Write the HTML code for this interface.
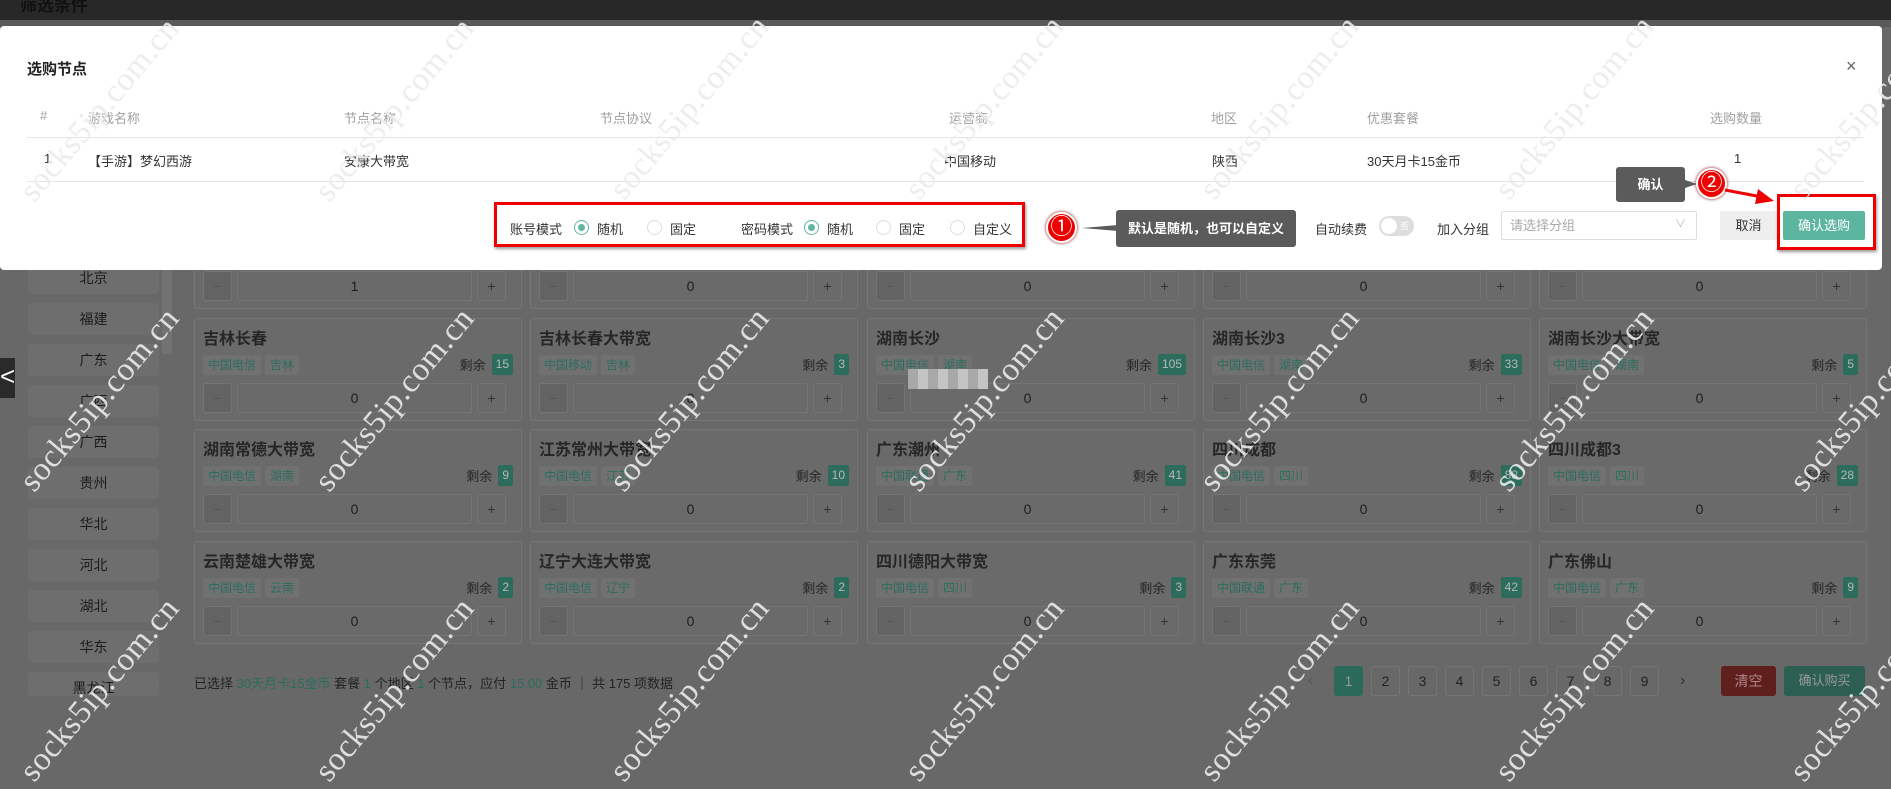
<!DOCTYPE html>
<html><head><meta charset="utf-8"><style>
*{margin:0;padding:0;box-sizing:border-box}
body{width:1891px;height:724px;overflow:hidden;background:#686868;font-family:"Liberation Sans","Noto Sans CJK SC",sans-serif;position:relative;font-size:13px;color:#222}
.a{position:absolute}
.sb{position:absolute;left:28px;width:131px;height:32px;background:#6e6e6e;border-radius:4px;text-align:center;line-height:32px;font-size:14px;color:#1c1c1c}
.card{position:absolute;width:328px;height:103px;border:1px solid #767676;border-radius:3px;background:#6a6a6a}
.card .t{position:absolute;left:8px;top:6px;font-size:16px;font-weight:bold;color:#262626}
.card .tags{position:absolute;left:8px;top:36px;display:flex;gap:4px}
.tag{background:#717171;color:#2c6e5d;font-size:12px;height:20px;line-height:20px;padding:0 5px;border-radius:2px}
.rem{position:absolute;right:8px;top:35px;font-size:13px;color:#262626;display:flex;align-items:center;gap:6px}
.rem b{display:inline-block;background:#2c6c5c;color:#b8b8b8;font-weight:normal;height:21px;line-height:21px;padding:0 4px;border-radius:2px;font-size:12px}
.mn,.in,.pl{position:absolute;top:64px;height:30px;border:1px solid #757575;border-radius:3px;text-align:center;line-height:28px;font-size:14px;color:#1e1e1e}
.mn{left:8px;width:29px;background:#636363;color:#555}
.in{left:42px;width:235px;background:#6a6a6a}
.pl{left:282px;width:29px;background:#6a6a6a;color:#333}
.pg{position:absolute;top:666px;width:29px;height:30px;border:1px solid #757575;border-radius:3px;text-align:center;line-height:28px;font-size:14px;color:#222}
.wm{position:absolute;font-family:"Liberation Serif",serif;font-size:33px;color:rgba(235,235,235,0.9);transform:translate(-50%,-50%) rotate(-50deg);white-space:nowrap;letter-spacing:0.5px}
.hd{position:absolute;top:108px;color:#a0a0a0;font-size:13px}
.rw{position:absolute;top:151px;color:#333;font-size:13px}
.rd{position:absolute;top:220px;width:15px;height:15px;border:1px solid #ddd;border-radius:50%;background:#fff}
.rd.on{border-color:#5fb7a0}
.rd.on:after{content:"";position:absolute;left:3px;top:3px;width:7px;height:7px;border-radius:50%;background:#5fb7a0}
.lb{position:absolute;top:219px;font-size:13px;color:#333}
.num{position:absolute;width:31px;height:31px;border-radius:50%;background:#e00;border:2px solid #fff;box-shadow:0 0 3px #800;color:#fff;text-align:center;line-height:26px;font-size:22px}
</style></head><body>
<div class="a" style="left:0;top:0;width:1891px;height:20px;background:#282828"></div>
<div class="a" style="left:20px;top:-9px;font-size:17px;font-weight:bold;color:#111">筛选条件</div>
<div class="a" style="left:0;top:20px;width:1891px;height:7px;background:#5a5a5a"></div>

<div class="sb" style="top:262px">北京</div>
<div class="sb" style="top:303px">福建</div>
<div class="sb" style="top:344px">广东</div>
<div class="sb" style="top:385px">广西</div>
<div class="sb" style="top:426px">广西</div>
<div class="sb" style="top:467px">贵州</div>
<div class="sb" style="top:508px">华北</div>
<div class="sb" style="top:549px">河北</div>
<div class="sb" style="top:590px">湖北</div>
<div class="sb" style="top:631px">华东</div>
<div class="sb" style="top:672px;height:24px">黑龙江</div>
<div class="a" style="left:162px;top:262px;width:10px;height:92px;background:#727272"></div>
<div class="a" style="left:0;top:358px;width:15px;height:40px;background:#2a2a2a;color:#fff;font-size:26px;line-height:36px">&lt;</div>

<div class="card" style="left:194px;top:206px"><div class="mn">−</div><div class="in">1</div><div class="pl">+</div></div>
<div class="card" style="left:530px;top:206px"><div class="mn">−</div><div class="in">0</div><div class="pl">+</div></div>
<div class="card" style="left:867px;top:206px"><div class="mn">−</div><div class="in">0</div><div class="pl">+</div></div>
<div class="card" style="left:1203px;top:206px"><div class="mn">−</div><div class="in">0</div><div class="pl">+</div></div>
<div class="card" style="left:1539px;top:206px"><div class="mn">−</div><div class="in">0</div><div class="pl">+</div></div>

<div class="card" style="left:194px;top:318px"><div class="t">吉林长春</div><div class="tags"><span class="tag">中国电信</span><span class="tag">吉林</span></div><div class="rem">剩余<b>15</b></div><div class="mn">−</div><div class="in">0</div><div class="pl">+</div></div>
<div class="card" style="left:530px;top:318px"><div class="t">吉林长春大带宽</div><div class="tags"><span class="tag">中国移动</span><span class="tag">吉林</span></div><div class="rem">剩余<b>3</b></div><div class="mn">−</div><div class="in">0</div><div class="pl">+</div></div>
<div class="card" style="left:867px;top:318px"><div class="t">湖南长沙</div><div class="tags"><span class="tag">中国电信</span><span class="tag">湖南</span></div><div class="rem">剩余<b>105</b></div><div class="mn">−</div><div class="in">0</div><div class="pl">+</div></div>
<div class="card" style="left:1203px;top:318px"><div class="t">湖南长沙3</div><div class="tags"><span class="tag">中国电信</span><span class="tag">湖南</span></div><div class="rem">剩余<b>33</b></div><div class="mn">−</div><div class="in">0</div><div class="pl">+</div></div>
<div class="card" style="left:1539px;top:318px"><div class="t">湖南长沙大带宽</div><div class="tags"><span class="tag">中国电信</span><span class="tag">湖南</span></div><div class="rem">剩余<b>5</b></div><div class="mn">−</div><div class="in">0</div><div class="pl">+</div></div>

<div class="card" style="left:194px;top:429px"><div class="t">湖南常德大带宽</div><div class="tags"><span class="tag">中国电信</span><span class="tag">湖南</span></div><div class="rem">剩余<b>9</b></div><div class="mn">−</div><div class="in">0</div><div class="pl">+</div></div>
<div class="card" style="left:530px;top:429px"><div class="t">江苏常州大带宽</div><div class="tags"><span class="tag">中国电信</span><span class="tag">江苏</span></div><div class="rem">剩余<b>10</b></div><div class="mn">−</div><div class="in">0</div><div class="pl">+</div></div>
<div class="card" style="left:867px;top:429px"><div class="t">广东潮州</div><div class="tags"><span class="tag">中国联通</span><span class="tag">广东</span></div><div class="rem">剩余<b>41</b></div><div class="mn">−</div><div class="in">0</div><div class="pl">+</div></div>
<div class="card" style="left:1203px;top:429px"><div class="t">四川成都</div><div class="tags"><span class="tag">中国电信</span><span class="tag">四川</span></div><div class="rem">剩余<b>88</b></div><div class="mn">−</div><div class="in">0</div><div class="pl">+</div></div>
<div class="card" style="left:1539px;top:429px"><div class="t">四川成都3</div><div class="tags"><span class="tag">中国电信</span><span class="tag">四川</span></div><div class="rem">剩余<b>28</b></div><div class="mn">−</div><div class="in">0</div><div class="pl">+</div></div>

<div class="card" style="left:194px;top:541px"><div class="t">云南楚雄大带宽</div><div class="tags"><span class="tag">中国电信</span><span class="tag">云南</span></div><div class="rem">剩余<b>2</b></div><div class="mn">−</div><div class="in">0</div><div class="pl">+</div></div>
<div class="card" style="left:530px;top:541px"><div class="t">辽宁大连大带宽</div><div class="tags"><span class="tag">中国电信</span><span class="tag">辽宁</span></div><div class="rem">剩余<b>2</b></div><div class="mn">−</div><div class="in">0</div><div class="pl">+</div></div>
<div class="card" style="left:867px;top:541px"><div class="t">四川德阳大带宽</div><div class="tags"><span class="tag">中国电信</span><span class="tag">四川</span></div><div class="rem">剩余<b>3</b></div><div class="mn">−</div><div class="in">0</div><div class="pl">+</div></div>
<div class="card" style="left:1203px;top:541px"><div class="t">广东东莞</div><div class="tags"><span class="tag">中国联通</span><span class="tag">广东</span></div><div class="rem">剩余<b>42</b></div><div class="mn">−</div><div class="in">0</div><div class="pl">+</div></div>
<div class="card" style="left:1539px;top:541px"><div class="t">广东佛山</div><div class="tags"><span class="tag">中国电信</span><span class="tag">广东</span></div><div class="rem">剩余<b>9</b></div><div class="mn">−</div><div class="in">0</div><div class="pl">+</div></div>

<div class="a" style="left:908px;top:369px;width:80px;height:20px;background:repeating-linear-gradient(90deg,#a8a8a8 0 10px,#c4c4c4 10px 20px)"></div>

<div class="a" style="left:194px;top:673px;font-size:13px;color:#222">已选择 <span style="color:#2c6e5d">30天月卡15金币</span> 套餐 <span style="color:#2c6e5d">1</span> 个地区 <span style="color:#2c6e5d">1</span> 个节点，应付 <span style="color:#2c6e5d">15.00</span> 金币 ｜ 共 175 项数据</div>
<div class="a" style="left:1308px;top:672px;color:#555;font-size:16px">‹</div>
<div class="pg" style="left:1334px;background:#2b6a5a;border-color:#2b6a5a;color:#999">1</div>
<div class="pg" style="left:1371px">2</div>
<div class="pg" style="left:1408px">3</div>
<div class="pg" style="left:1445px">4</div>
<div class="pg" style="left:1482px">5</div>
<div class="pg" style="left:1519px">6</div>
<div class="pg" style="left:1556px">7</div>
<div class="pg" style="left:1593px">8</div>
<div class="pg" style="left:1630px">9</div>
<div class="a" style="left:1680px;top:672px;color:#333;font-size:16px">›</div>
<div class="a" style="left:1721px;top:666px;width:55px;height:30px;background:#5f1f1c;border-radius:3px;color:#a88;text-align:center;line-height:30px;font-size:14px">清空</div>
<div class="a" style="left:1784px;top:666px;width:81px;height:30px;background:#2c5e52;border-radius:3px;color:#999;text-align:center;line-height:30px;font-size:13px">确认购买</div>

<div class="a" style="left:0;top:26px;width:1882px;height:244px;background:#fff;border-radius:4px"></div>
<div class="a" style="left:27px;top:58px;font-size:15px;font-weight:bold;color:#222">选购节点</div>
<div class="a" style="left:1846px;top:56px;font-size:18px;color:#666">×</div>
<div class="hd" style="left:40px">#</div>
<div class="hd" style="left:88px">游戏名称</div>
<div class="hd" style="left:344px">节点名称</div>
<div class="hd" style="left:600px">节点协议</div>
<div class="hd" style="left:949px">运营商</div>
<div class="hd" style="left:1211px">地区</div>
<div class="hd" style="left:1367px">优惠套餐</div>
<div class="hd" style="left:1710px">选购数量</div>
<div class="a" style="left:27px;top:137px;width:1837px;height:1px;background:#e4e4e4"></div>
<div class="rw" style="left:44px">1</div>
<div class="rw" style="left:88px">【手游】梦幻西游</div>
<div class="rw" style="left:344px">安康大带宽</div>
<div class="rw" style="left:944px">中国移动</div>
<div class="rw" style="left:1212px">陕西</div>
<div class="rw" style="left:1367px">30天月卡15金币</div>
<div class="rw" style="left:1734px">1</div>
<div class="a" style="left:27px;top:181px;width:1837px;height:1px;background:#e4e4e4"></div>

<div class="a" style="left:494px;top:202px;width:531px;height:45px;border:3px solid #e00;box-shadow:1px 2px 3px rgba(0,0,0,.4)"></div>
<div class="lb" style="left:510px">账号模式</div>
<div class="rd on" style="left:574px"></div><div class="lb" style="left:597px">随机</div>
<div class="rd" style="left:647px"></div><div class="lb" style="left:670px">固定</div>
<div class="lb" style="left:741px">密码模式</div>
<div class="rd on" style="left:804px"></div><div class="lb" style="left:827px">随机</div>
<div class="rd" style="left:876px"></div><div class="lb" style="left:899px">固定</div>
<div class="rd" style="left:950px"></div><div class="lb" style="left:973px">自定义</div>

<div class="num" style="left:1046px;top:212px">①</div>
<div class="a" style="left:1082px;top:225px;width:0;height:0;border-top:3px solid transparent;border-bottom:3px solid transparent;border-right:36px solid #5b5b5b"></div>
<div class="a" style="left:1116px;top:210px;width:180px;height:37px;background:#5b5b5b;border-radius:3px;color:#fff;font-weight:bold;font-size:13px;line-height:37px;text-align:center">默认是随机，也可以自定义</div>

<div class="lb" style="left:1315px">自动续费</div>
<div class="a" style="left:1379px;top:216px;width:35px;height:20px;border-radius:10px;background:#ddd"><div style="position:absolute;left:2px;top:2px;width:16px;height:16px;border-radius:50%;background:#fff"></div><span style="position:absolute;left:21px;top:3px;font-size:9px;color:#fff">否</span></div>
<div class="lb" style="left:1437px">加入分组</div>
<div class="a" style="left:1501px;top:211px;width:196px;height:29px;border:1px solid #ddd;border-radius:2px;color:#aaa;font-size:13px;line-height:27px;padding-left:8px">请选择分组<span style="position:absolute;right:10px;top:-1px;color:#bbb;font-size:11px">∨</span></div>
<div class="a" style="left:1720px;top:211px;width:57px;height:29px;background:#eee;border-radius:2px;text-align:center;line-height:29px;color:#333">取消</div>
<div class="a" style="left:1783px;top:211px;width:82px;height:29px;background:#5cb59e;border-radius:2px;text-align:center;line-height:29px;color:#fff">确认选购</div>
<div class="a" style="left:1777px;top:194px;width:99px;height:56px;border:3px solid #e00;box-shadow:1px 2px 3px rgba(0,0,0,.4)"></div>

<div class="a" style="left:1616px;top:167px;width:69px;height:35px;background:#5b5b5b;border-radius:3px;color:#fff;font-weight:bold;font-size:13px;line-height:35px;text-align:center">确认</div>
<div class="a" style="left:1685px;top:180px;width:0;height:0;border-top:4px solid transparent;border-bottom:4px solid transparent;border-left:12px solid #5b5b5b"></div>
<div class="num" style="left:1696px;top:168px">②</div>
<div class="a" style="left:1722px;top:185px"><svg width="60" height="30"><path d="M3 5 L40 12" stroke="#e00" stroke-width="3"/><path d="M36 4 L52 16 L33 19 Z" fill="#e00"/></svg></div>

<div class="wm" style="left:100px;top:110px">socks5ip.com.cn</div>
<div class="wm" style="left:395px;top:110px">socks5ip.com.cn</div>
<div class="wm" style="left:690px;top:108px">socks5ip.com.cn</div>
<div class="wm" style="left:985px;top:108px">socks5ip.com.cn</div>
<div class="wm" style="left:1280px;top:108px">socks5ip.com.cn</div>
<div class="wm" style="left:1575px;top:108px">socks5ip.com.cn</div>
<div class="wm" style="left:1870px;top:108px">socks5ip.com.cn</div>
<div class="wm" style="left:100px;top:400px">socks5ip.com.cn</div>
<div class="wm" style="left:395px;top:400px">socks5ip.com.cn</div>
<div class="wm" style="left:690px;top:400px">socks5ip.com.cn</div>
<div class="wm" style="left:985px;top:400px">socks5ip.com.cn</div>
<div class="wm" style="left:1280px;top:400px">socks5ip.com.cn</div>
<div class="wm" style="left:1575px;top:400px">socks5ip.com.cn</div>
<div class="wm" style="left:1870px;top:400px">socks5ip.com.cn</div>
<div class="wm" style="left:100px;top:690px">socks5ip.com.cn</div>
<div class="wm" style="left:395px;top:690px">socks5ip.com.cn</div>
<div class="wm" style="left:690px;top:690px">socks5ip.com.cn</div>
<div class="wm" style="left:985px;top:690px">socks5ip.com.cn</div>
<div class="wm" style="left:1280px;top:690px">socks5ip.com.cn</div>
<div class="wm" style="left:1575px;top:690px">socks5ip.com.cn</div>
<div class="wm" style="left:1870px;top:690px">socks5ip.com.cn</div>
</body></html>
